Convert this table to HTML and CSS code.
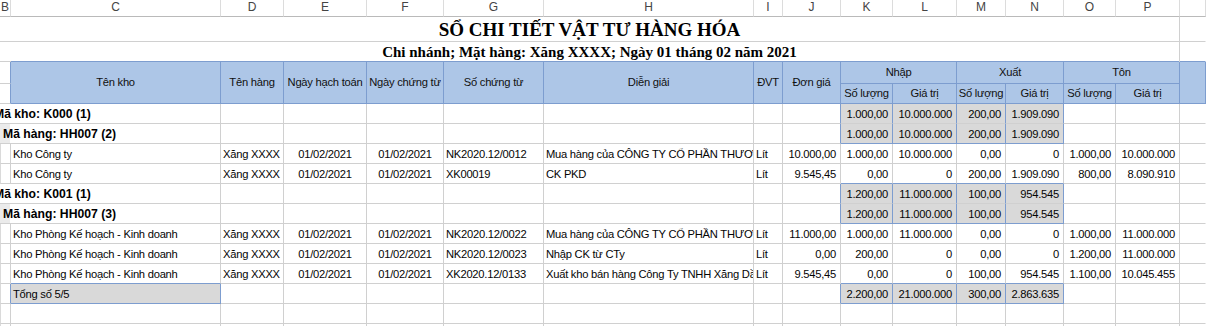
FILE: index.html
```html
<!DOCTYPE html>
<html lang="vi">
<head>
<meta charset="utf-8">
<title>Sổ chi tiết vật tư hàng hóa</title>
<link rel="stylesheet" href="styles.css">
</head>
<body>
<div class="sheet">
  <!-- column letters -->
  <div class="c col">B</div><div class="c col">C</div><div class="c col">D</div><div class="c col">E</div>
  <div class="c col">F</div><div class="c col">G</div><div class="c col">H</div><div class="c col">I</div>
  <div class="c col">J</div><div class="c col">K</div><div class="c col">L</div><div class="c col">M</div>
  <div class="c col">N</div><div class="c col">O</div><div class="c col">P</div><div class="c col q"></div>

  <!-- title -->
  <div class="c title">SỔ CHI TIẾT VẬT TƯ HÀNG HÓA</div><div class="c q"></div>
  <div class="c sub">Chi nhánh; Mặt hàng: Xăng XXXX; Ngày 01 tháng 02 năm 2021</div><div class="c q bB"></div>

  <!-- header -->
  <div class="c bR"></div>
  <div class="c h span2">Tên kho</div>
  <div class="c h span2">Tên hàng</div>
  <div class="c h span2">Ngày hạch toán</div>
  <div class="c h span2">Ngày chứng từ</div>
  <div class="c h span2">Số chứng từ</div>
  <div class="c h span2">Diễn giải</div>
  <div class="c h span2">ĐVT</div>
  <div class="c h span2">Đơn giá</div>
  <div class="c h w2">Nhập</div>
  <div class="c h w2">Xuất</div>
  <div class="c h w2">Tôn</div>
  <div class="c h span2 q"></div>
  <div class="c bR"></div>
  <div class="c h">Số lượng</div><div class="c h">Giá trị</div>
  <div class="c h">Số lượng</div><div class="c h">Giá trị</div>
  <div class="c h">Số lượng</div><div class="c h">Giá trị</div>

  <!-- Mã kho K000 -->
  <div class="c grp k">Mã kho: K000 (1)</div>
  <div class="c"></div><div class="c"></div><div class="c"></div><div class="c"></div><div class="c"></div><div class="c"></div>
  <div class="c bR"></div>
  <div class="c r g bR">1.000,00</div><div class="c r g bR">10.000.000</div><div class="c r g bR">200,00</div><div class="c r g bR">1.909.090</div>
  <div class="c"></div><div class="c"></div><div class="c q"></div>

  <!-- Mã hàng HH007 (2) -->
  <div class="c grp hh">Mã hàng: HH007 (2)</div>
  <div class="c"></div><div class="c"></div><div class="c"></div><div class="c"></div><div class="c"></div><div class="c"></div>
  <div class="c bR"></div>
  <div class="c r g bR bB">1.000,00</div><div class="c r g bR bB">10.000.000</div><div class="c r g bR bB">200,00</div><div class="c r g bR bB">1.909.090</div>
  <div class="c"></div><div class="c"></div><div class="c q"></div>

  <!-- data 1 -->
  <div class="c b"></div>
  <div class="c">Kho Công ty</div>
  <div class="c">Xăng XXXX</div>
  <div class="c m">01/02/2021</div>
  <div class="c m">01/02/2021</div>
  <div class="c">NK2020.12/0012</div>
  <div class="c">Mua hàng của CÔNG TY CỔ PHẦN THƯƠNG MẠI DẦU KHÍ</div>
  <div class="c">Lít</div>
  <div class="c r">10.000,00</div>
  <div class="c r">1.000,00</div><div class="c r">10.000.000</div><div class="c r">0,00</div><div class="c r">0</div>
  <div class="c r">1.000,00</div><div class="c r">10.000.000</div><div class="c q"></div>

  <!-- data 2 -->
  <div class="c b"></div>
  <div class="c">Kho Công ty</div>
  <div class="c">Xăng XXXX</div>
  <div class="c m">01/02/2021</div>
  <div class="c m">01/02/2021</div>
  <div class="c">XK00019</div>
  <div class="c">CK PKD</div>
  <div class="c">Lít</div>
  <div class="c r">9.545,45</div>
  <div class="c r bB">0,00</div><div class="c r bB">0</div><div class="c r bB">200,00</div><div class="c r bB">1.909.090</div>
  <div class="c r">800,00</div><div class="c r">8.090.910</div><div class="c q"></div>

  <!-- Mã kho K001 -->
  <div class="c grp k">Mã kho: K001 (1)</div>
  <div class="c"></div><div class="c"></div><div class="c"></div><div class="c"></div><div class="c"></div><div class="c"></div>
  <div class="c bR"></div>
  <div class="c r g bR">1.200,00</div><div class="c r g bR">11.000.000</div><div class="c r g bR">100,00</div><div class="c r g bR">954.545</div>
  <div class="c"></div><div class="c"></div><div class="c q"></div>

  <!-- Mã hàng HH007 (3) -->
  <div class="c grp hh">Mã hàng: HH007 (3)</div>
  <div class="c"></div><div class="c"></div><div class="c"></div><div class="c"></div><div class="c"></div><div class="c"></div>
  <div class="c bR"></div>
  <div class="c r g bR bB">1.200,00</div><div class="c r g bR bB">11.000.000</div><div class="c r g bR bB">100,00</div><div class="c r g bR bB">954.545</div>
  <div class="c"></div><div class="c"></div><div class="c q"></div>

  <!-- data 3 -->
  <div class="c b"></div>
  <div class="c">Kho Phòng Kế hoạch - Kinh doanh</div>
  <div class="c">Xăng XXXX</div>
  <div class="c m">01/02/2021</div>
  <div class="c m">01/02/2021</div>
  <div class="c">NK2020.12/0022</div>
  <div class="c">Mua hàng của CÔNG TY CỔ PHẦN THƯƠNG MẠI DẦU KHÍ</div>
  <div class="c">Lít</div>
  <div class="c r">11.000,00</div>
  <div class="c r">1.000,00</div><div class="c r">11.000.000</div><div class="c r">0,00</div><div class="c r">0</div>
  <div class="c r">1.000,00</div><div class="c r">11.000.000</div><div class="c q"></div>

  <!-- data 4 -->
  <div class="c b"></div>
  <div class="c">Kho Phòng Kế hoạch - Kinh doanh</div>
  <div class="c">Xăng XXXX</div>
  <div class="c m">01/02/2021</div>
  <div class="c m">01/02/2021</div>
  <div class="c">NK2020.12/0023</div>
  <div class="c">Nhập CK từ CTy</div>
  <div class="c">Lít</div>
  <div class="c r">0,00</div>
  <div class="c r">200,00</div><div class="c r">0</div><div class="c r">0,00</div><div class="c r">0</div>
  <div class="c r">1.200,00</div><div class="c r">11.000.000</div><div class="c q"></div>

  <!-- data 5 -->
  <div class="c b"></div>
  <div class="c bB">Kho Phòng Kế hoạch - Kinh doanh</div>
  <div class="c">Xăng XXXX</div>
  <div class="c m">01/02/2021</div>
  <div class="c m">01/02/2021</div>
  <div class="c">XK2020.12/0133</div>
  <div class="c">Xuất kho bán hàng Công Ty TNHH Xăng Dầu Miền Nam</div>
  <div class="c">Lít</div>
  <div class="c r">9.545,45</div>
  <div class="c r bB">0,00</div><div class="c r bB">0</div><div class="c r bB">100,00</div><div class="c r bB">954.545</div>
  <div class="c r">1.100,00</div><div class="c r">10.045.455</div><div class="c q"></div>

  <!-- total -->
  <div class="c b bR"></div>
  <div class="c g bR bB">Tổng số 5/5</div>
  <div class="c"></div><div class="c"></div><div class="c"></div><div class="c"></div><div class="c"></div><div class="c"></div>
  <div class="c bR"></div>
  <div class="c r g bR bB">2.200,00</div><div class="c r g bR bB">21.000.000</div><div class="c r g bR bB">300,00</div><div class="c r g bR bB">2.863.635</div>
  <div class="c"></div><div class="c"></div><div class="c q"></div>

  <!-- empty rows -->
  <div class="c b"></div>
  <div class="c"></div><div class="c"></div><div class="c"></div><div class="c"></div><div class="c"></div><div class="c"></div><div class="c"></div>
  <div class="c"></div><div class="c"></div><div class="c"></div><div class="c"></div><div class="c"></div><div class="c"></div><div class="c"></div><div class="c q"></div>

  <div class="c b"></div>
  <div class="c"></div><div class="c"></div><div class="c"></div><div class="c"></div><div class="c"></div><div class="c"></div><div class="c"></div>
  <div class="c"></div><div class="c"></div><div class="c"></div><div class="c"></div><div class="c"></div><div class="c"></div><div class="c"></div><div class="c q"></div>
</div>
</body>
</html>
```

FILE: styles.css
```css
* { box-sizing: border-box; }

html, body {
  margin: 0;
  padding: 0;
  background: #ffffff;
}

body {
  width: 1206px;
  height: 326px;
  overflow: hidden;
  font-family: "Liberation Sans", Arial, sans-serif;
  font-size: 11.2px;
  letter-spacing: -0.25px;
  color: #050505;
}

.sheet {
  display: grid;
  grid-template-columns: 11px 210px 63px 83px 77px 100px 210px 29px 58px 52px 64px 49px 58px 52px 64px 26px;
  grid-template-rows: 17px 25px 20px 22px 20px repeat(12, 20px);
}

.c {
  border-right: 1px solid #d0d0d0;
  border-bottom: 1px solid #d0d0d0;
  white-space: nowrap;
  overflow: hidden;
  padding: 2px 2px 0;
  line-height: 17px;
}

.q { border-right-color: transparent; }

/* column letters */
.col {
  padding: 0;
  text-align: center;
  font-size: 12px;
  line-height: 15px;
  letter-spacing: 0;
  color: #444444;
  border-right-color: #dcdcdc;
  border-bottom-color: #bababa;
}

/* titles */
.title {
  grid-column: 1 / 16;
  padding-top: 1px;
  text-align: center;
  font-family: "Liberation Serif", "Times New Roman", serif;
  font-weight: bold;
  font-size: 19px;
  line-height: 23px;
  letter-spacing: 0;
  color: #000;
}

.sub {
  grid-column: 1 / 16;
  padding-top: 1px;
  text-align: center;
  font-family: "Liberation Serif", "Times New Roman", serif;
  font-weight: bold;
  font-size: 15px;
  line-height: 18px;
  letter-spacing: 0;
  color: #000;
  border-bottom: 0;
  background: linear-gradient(to right, #d0d0d0 11px, #7d9dcf 11px) left bottom / 100% 1px no-repeat;
}

/* header */
.h {
  display: flex;
  align-items: center;
  justify-content: center;
  padding: 0 1px;
  background: #adc6e7;
  border-right-color: #7d9dcf;
  border-bottom-color: #7d9dcf;
  color: #111111;
}
.span2 { grid-row: span 2; }
.w2 { grid-column: span 2; }

/* group rows */
.grp {
  grid-column: span 2;
  padding-left: 0;
  font-weight: bold;
  font-size: 12.2px;
  letter-spacing: 0;
  color: #000;
}
.k { text-indent: -6px; }
.hh {
  text-indent: 3px;
  background: linear-gradient(to right, #ebebeb 10px, transparent 10px);
}

.b { border-left: 1px solid #dadada; }

.r { text-align: right; padding-right: 4px; }
.m { text-align: center; }

.g { background: #d9d9d9; }
.bR { border-right-color: #7d9dcf; }
.bB { border-bottom-color: #7d9dcf; }
```
